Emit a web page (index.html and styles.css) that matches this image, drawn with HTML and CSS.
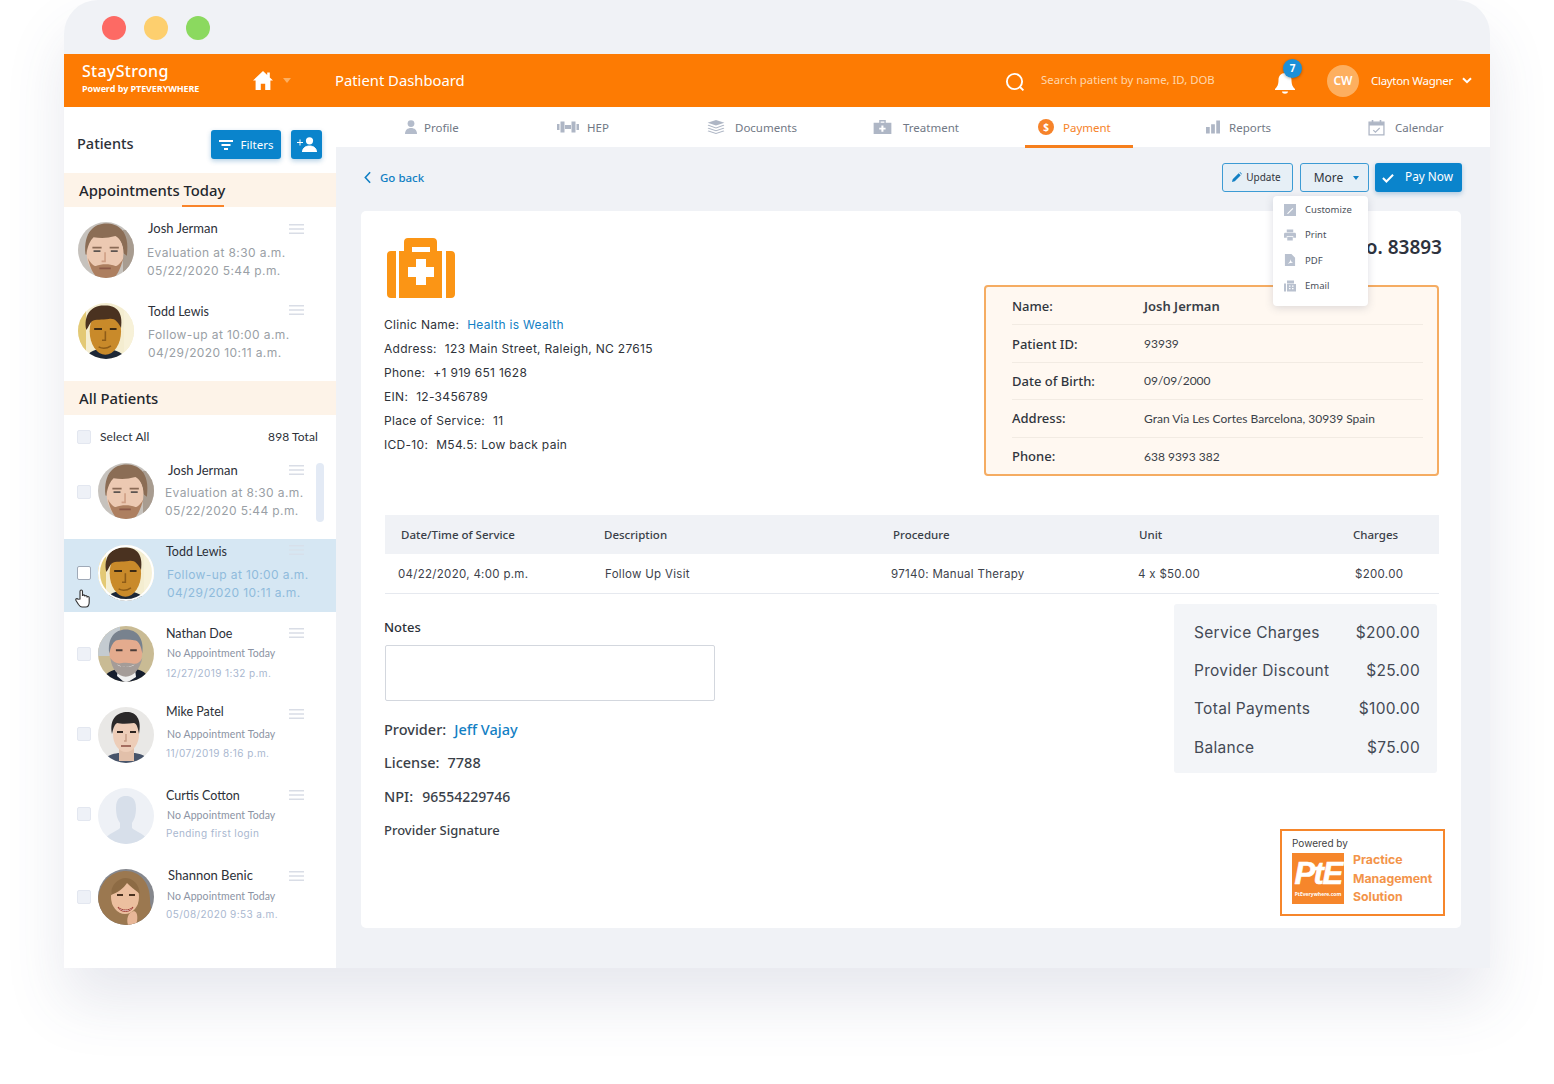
FILE: index.html
```html
<!DOCTYPE html>
<html lang="en">
<head>
	<meta charset="UTF-8">
	<title>Patient Dashboard</title>
	<link rel="stylesheet" href="styles.css">
</head>
<body>

<svg class="defs" width="0" height="0">
	<symbol id="face-josh" viewBox="0 0 56 56">
		<rect width="56" height="56" fill="#c6c2bd"/>
		<rect x="45" y="8" width="11" height="48" fill="#a89c90"/>
		<g transform="translate(-4 -2) scale(1.15)">
			<path d="M10 30C8 10 18 3 28 3s21 6 18 28l-3-2c0-8-3-14-8-15-7 2-14 1-18 1-3 3-4 9-4 15z" fill="#8b6d55"/>
			<ellipse cx="27" cy="29" rx="16" ry="21" fill="#ecc9b2"/>
			<path d="M11 28c-1-14 7-23 17-23s18 8 16 23c-2-8-4-12-8-14-7 2-13 2-19 1-3 3-5 7-6 13z" fill="#8b6d55"/>
			<path d="M12 33c2 8 4 13 8 17 5 3 11 3 15 0 4-4 6-10 8-17-2 4-5 7-7 7-5-2-12-2-17 0-2 0-5-3-7-7z" fill="#ad7f60"/>
			<path d="M16 24h8M31 24h8" stroke="#8a6a55" stroke-width="1.600"/>
			<path d="M17 27h6M32 27h6" stroke="#5c5450" stroke-width="1.600"/>
			<path d="M27 28v8h-3" stroke="#cf9f85" stroke-width="1.400" fill="none"/>
			<path d="M22 42h10" stroke="#8d5a48" stroke-width="1.600"/>
		</g>
	</symbol>
	<symbol id="face-todd" viewBox="0 0 56 56">
		<rect width="56" height="56" fill="#f4edd0"/>
		<rect x="0" width="8" height="56" fill="#e3c975"/>
		<rect x="46" width="10" height="56" fill="#f7f1d8"/>
		<path d="M8 56c2-8 10-10 18-10s18 2 22 10z" fill="#1d2736"/>
		<g transform="translate(-4 -2) scale(1.12)">
			<ellipse cx="28" cy="27" rx="14" ry="21" fill="#c98a2a"/>
			<path d="M11 26C8 12 16 3 28 4c10 0 16 6 14 20-3-6-6-9-11-8-6 1-12 0-15 2-2 2-3 5-5 8z" fill="#4a3220"/>
			<path d="M18 25h7M32 25h6" stroke="#3c2a14" stroke-width="2"/>
			<path d="M28 27v8h-3M22 41c4 2 8 1 11-1" stroke="#8e5c18" stroke-width="1.400" fill="none"/>
		</g>
	</symbol>
	<symbol id="face-nathan" viewBox="0 0 56 56">
		<rect width="56" height="56" fill="#c9bb94"/>
		<rect width="22" height="30" fill="#c4cbd0"/>
		<path d="M4 56c2-9 10-12 16-13l8 6 9-6c7 1 13 4 15 13z" fill="#161e2e"/>
		<path d="M20 43l8 6 9-6 1 8-8 5h-4l-7-6z" fill="#f0f0f0"/>
		<g transform="translate(-3 -1) scale(1.1)">
			<ellipse cx="28" cy="24" rx="15" ry="20" fill="#e4ab8e"/>
			<path d="M13 26c-2-14 5-22 15-22s17 8 15 22c-1-7-3-11-6-12-6-1-13-1-18 0-3 2-5 6-6 12z" fill="#78828e"/>
			<path d="M14 30c1 10 7 17 14 17s13-7 15-17c-2 4-5 6-9 5-4-1-9-1-12 0-3 0-6-2-8-5z" fill="#a49c98"/>
			<path d="M20 36c5 3 11 3 16 0-2 3-14 3-16 0z" fill="#fff"/>
			<path d="M19 23h6M32 23h6" stroke="#4b3c38" stroke-width="1.800"/>
		</g>
	</symbol>
	<symbol id="face-mike" viewBox="0 0 56 56">
		<rect width="56" height="56" fill="#e9e8e6"/>
		<path d="M5 56c2-8 10-9 15-10h17c6 1 13 3 15 10z" fill="#47546a"/>
		<rect x="21" y="38" width="15" height="16" fill="#e2c0aa"/>
		<ellipse cx="28" cy="27" rx="13" ry="18" fill="#edcdb8"/>
		<path d="M14 27c-3-16 6-22 15-22s15 7 12 22c-1-6-2-10-5-11-7 1-13 1-17 0-3 2-4 6-5 11z" fill="#2a2829"/>
		<path d="M19 25h6M32 25h6" stroke="#2d2420" stroke-width="2"/>
		<path d="M28 27v7h-2" stroke="#c69c85" stroke-width="1.400" fill="none"/>
		<path d="M23 39h10" stroke="#a56e60" stroke-width="1.800"/>
	</symbol>
	<symbol id="face-curtis" viewBox="0 0 56 56">
		<rect width="56" height="56" fill="#eef1f6"/>
		<path d="M18 20c0-10 5-12 10-12s10 2 10 12c0 8-2 12-4 15v5c3 3 12 6 15 11v5H7v-5c3-5 12-8 15-11v-5c-2-3-4-7-4-15z" fill="#d7dfea"/>
	</symbol>
	<symbol id="face-shannon" viewBox="0 0 56 56">
		<rect width="56" height="56" fill="#85878d"/>
		<path d="M0 56V30C2 10 16 2 28 2c14 0 24 12 24 28 0 10 4 18 4 26z" fill="#9b7850"/>
		<ellipse cx="27" cy="28" rx="14" ry="17" fill="#ecbf9f"/>
		<path d="M13 26c0-10 6-16 14-17 8 0 14 6 15 16-5-4-10-8-13-11-3 5-10 10-16 12z" fill="#8d6b44"/>
		<path d="M20 38c4 4 11 4 15 0-2 6-13 6-15 0z" fill="#fff" stroke="#a3433a"/>
		<path d="M19 26h6M31 26h6" stroke="#4a3220" stroke-width="1.800"/>
		<path d="M30 56c-2-6 0-13 6-14 4 1 4 8 2 14z" fill="#e8b798"/>
	</symbol>
	<symbol id="menu-lines" viewBox="0 0 15 10">
		<path d="M0 .7h15M0 5h15M0 9.300h15" stroke="#d9dde6" stroke-width="1.400"/>
	</symbol>
</svg>

<div class="window">
	<div class="titlebar">
		<span class="dot dot-red"></span>
		<span class="dot dot-yellow"></span>
		<span class="dot dot-green"></span>
	</div>

	<header class="topbar">
		<div class="brand">
			<div class="brand-name">StayStrong</div>
			<div class="brand-sub">Powerd by PTEVERYWHERE</div>
		</div>
		<svg class="home-icon" viewBox="0 0 20 19"><path d="M10 0L0 9.500h2.600V19h5.200v-6.200h4.400V19h5.200V9.500H20l-3.200-3V1.400h-2.600v2.700z" fill="#fff"/></svg>
		<span class="home-caret"></span>
		<div class="page-title">Patient Dashboard</div>
		<svg class="search-icon" viewBox="0 0 20 20"><circle cx="9.500" cy="9.500" r="7.600" fill="none" stroke="#fff" stroke-width="1.900"/><path d="M15 15l3.400 3.400" stroke="#fff" stroke-width="1.900"/></svg>
		<div class="search-text">Search patient by name, ID, DOB</div>
		<div class="bell">
			<svg viewBox="0 0 20 22"><path d="M10 1c-4 0-6.500 3-6.500 7 0 5-1.500 7-3.500 9v1h20v-1c-2-2-3.500-4-3.500-9 0-4-2.500-7-6.500-7zM7 19.500h6c0 3-6 3-6 0z" fill="#fff"/></svg>
			<span class="badge">7</span>
		</div>
		<div class="user-avatar">CW</div>
		<div class="user-name">Clayton Wagner</div>
		<svg class="user-chevron" viewBox="0 0 10 7"><path d="M1 1.200l4 4 4-4" fill="none" stroke="#fff" stroke-width="2"/></svg>
	</header>

	<div class="body">
		<aside class="sidebar">
			<div class="side-head">
				<h2>Patients</h2>
				<button class="btn-filter" type="button">
					<svg viewBox="0 0 14 10"><path d="M0 1h14M2.500 5h9M5 9h4" stroke="#fff" stroke-width="1.800"/></svg>
					Filters
				</button>
				<button class="btn-add" type="button">
					<svg viewBox="0 0 20 15"><circle cx="12.500" cy="3.800" r="3.600" fill="#fff"/><path d="M5.500 15c0-4 3-6 7-6s7 2 7 6zM0 5.500h6M3 2.500v6" fill="#fff" stroke="#fff" stroke-width="1"/></svg>
				</button>
			</div>

			<div class="section-bar section-today">Appointments Today</div>

			<div class="patient appt appt-first">
				<svg class="avatar"><use href="#face-josh"/></svg>
				<div class="info">
					<div class="name">Josh Jerman</div>
					<div class="appt-line">Evaluation at 8:30 a.m.</div>
					<div class="appt-line">05/22/2020 5:44 p.m.</div>
				</div>
				<svg class="menu"><use href="#menu-lines"/></svg>
			</div>
			<div class="patient appt appt-second">
				<svg class="avatar"><use href="#face-todd"/></svg>
				<div class="info">
					<div class="name">Todd Lewis</div>
					<div class="appt-line">Follow-up at 10:00 a.m.</div>
					<div class="appt-line">04/29/2020 10:11 a.m.</div>
				</div>
				<svg class="menu"><use href="#menu-lines"/></svg>
			</div>

			<div class="section-bar section-all">All Patients</div>

			<div class="select-row">
				<span class="check"></span>
				<span class="select-label">Select All</span>
				<span class="select-total">898 Total</span>
			</div>

			<div class="patient row-josh">
				<span class="check"></span>
				<svg class="avatar"><use href="#face-josh"/></svg>
				<div class="info">
					<div class="name">Josh Jerman</div>
					<div class="appt-line">Evaluation at 8:30 a.m.</div>
					<div class="appt-line">05/22/2020 5:44 p.m.</div>
				</div>
				<svg class="menu"><use href="#menu-lines"/></svg>
				<span class="scrollbar"></span>
			</div>
			<div class="patient row-todd selected">
				<span class="check"></span>
				<svg class="avatar"><use href="#face-todd"/></svg>
				<div class="info">
					<div class="name">Todd Lewis</div>
					<div class="appt-line">Follow-up at 10:00 a.m.</div>
					<div class="appt-line">04/29/2020 10:11 a.m.</div>
				</div>
				<svg class="menu"><use href="#menu-lines"/></svg>
				<svg class="hand" viewBox="0 0 16 19"><path d="M5 10V2.500c0-2 2.500-2 2.500 0V7c0-1.500 2.300-1.500 2.300 0v.6c0-1.400 2.200-1.400 2.200 0v.8c0-1.300 2.200-1.300 2.200 0V13c0 3-1.500 5-3.500 5H7c-1.500 0-2.500-1-3.500-2.500L1 11.500c-.8-1.500 1-2.500 2-1.300z" fill="#fff" stroke="#333" stroke-width="1.100"/></svg>
			</div>
			<div class="patient row-plain row-nathan">
				<span class="check"></span>
				<svg class="avatar"><use href="#face-nathan"/></svg>
				<div class="info">
					<div class="name">Nathan Doe</div>
					<div class="none-line">No Appointment Today</div>
					<div class="date-line">12/27/2019 1:32 p.m.</div>
				</div>
				<svg class="menu"><use href="#menu-lines"/></svg>
			</div>
			<div class="patient row-plain row-mike">
				<span class="check"></span>
				<svg class="avatar"><use href="#face-mike"/></svg>
				<div class="info">
					<div class="name">Mike Patel</div>
					<div class="none-line">No Appointment Today</div>
					<div class="date-line">11/07/2019 8:16 p.m.</div>
				</div>
				<svg class="menu"><use href="#menu-lines"/></svg>
			</div>
			<div class="patient row-plain row-curtis">
				<span class="check"></span>
				<svg class="avatar"><use href="#face-curtis"/></svg>
				<div class="info">
					<div class="name">Curtis Cotton</div>
					<div class="none-line">No Appointment Today</div>
					<div class="date-line">Pending first login</div>
				</div>
				<svg class="menu"><use href="#menu-lines"/></svg>
			</div>
			<div class="patient row-plain row-shannon">
				<span class="check"></span>
				<svg class="avatar"><use href="#face-shannon"/></svg>
				<div class="info">
					<div class="name">Shannon Benic</div>
					<div class="none-line">No Appointment Today</div>
					<div class="date-line">05/08/2020 9:53 a.m.</div>
				</div>
				<svg class="menu"><use href="#menu-lines"/></svg>
			</div>
		</aside>

		<main class="main">
			<nav class="tabs">
				<div class="tab tab-profile">
					<svg viewBox="0 0 14 14"><circle cx="7" cy="3.600" r="3.400" fill="#b4bccb"/><path d="M1 14c0-4 2.500-6 6-6s6 2 6 6z" fill="#b4bccb"/></svg>
					Profile
				</div>
				<div class="tab">
					<svg class="tab-hep" viewBox="0 0 22 12"><path d="M0 3h2.500v6H0zM3.500 .5h4v11h-4zM14.500 .5h4v11h-4zM19.500 3H22v6h-2.500zM8 4h6v4H8z" fill="#aeb6c5"/></svg>
					HEP
				</div>
				<div class="tab">
					<svg class="tab-doc" viewBox="0 0 18 15"><path d="M9 0l9 3-9 3-9-3zM1 5.200l8 2.800 8-2.800 1 .8-9 3-9-3zM1 8.200L9 11l8-2.800 1 .8-9 3-9-3zM1 11.200L9 14l8-2.800 1 .8-9 3-9-3z" fill="#aeb6c5"/></svg>
					Documents
				</div>
				<div class="tab">
					<svg class="tab-wide" viewBox="0 0 19 15"><path d="M6 3V0h7v3h6v12H0V3zm1.500 0h4V1.500h-4zM8.300 6v2.300H6v2h2.300v2.300h2.200v-2.300h2.300v-2h-2.300V6z" fill="#aeb6c5" fill-rule="evenodd"/></svg>
					Treatment
				</div>
				<div class="tab tab-active">
					<span class="dollar">$</span>
					Payment
				</div>
				<div class="tab tab-reports">
					<svg viewBox="0 0 15 14"><path d="M0 7h4v7H0zM5.500 4h4v10h-4zM11 0h4v14h-4z" fill="#aeb6c5"/></svg>
					Reports
				</div>
				<div class="tab">
					<svg class="tab-cal" viewBox="0 0 16 16"><path d="M1 3h14v12H1z" fill="none" stroke="#aeb6c5" stroke-width="1.200"/><path d="M1 3h14v3H1zM3.500 1h1.500v3H3.500zM11 1h1.500v3H11z" fill="#aeb6c5"/><path d="M5 10.500l2 2 4-4" fill="none" stroke="#aeb6c5" stroke-width="1.100"/></svg>
					Calendar
				</div>
			</nav>

			<div class="content">
				<div class="actions">
					<a class="go-back">
						<svg viewBox="0 0 8 14"><path d="M7 1L1.500 7 7 13" fill="none" stroke="#1280c4" stroke-width="1.800"/></svg>
						Go back
					</a>
					<button class="btn-outline btn-update" type="button">
						<svg viewBox="0 0 12 12"><path d="M0 12l.8-3.400L8 1.500 10.500 4l-7.200 7.200zM9 .5l.7-.5 2.300 2.300-.6.700z" fill="#1280c4"/></svg>
						Update
					</button>
					<div class="more-wrap">
						<button class="btn-outline btn-more" type="button">More <span class="more-caret"></span></button>
						<div class="dropdown">
							<div class="drop-item">
								<svg viewBox="0 0 12 12"><path d="M0 0h12v12H0zM3 9.500l5.500-5.500 .8.800L4 10z" fill="#b9c1cf" fill-rule="evenodd"/></svg>
								Customize
							</div>
							<div class="drop-item">
								<svg viewBox="0 0 13 12"><path d="M3 0h7v3H3zM1.500 3.500h10c1 0 1.500.7 1.500 1.500v4h-3V7H3v2H0V5c0-.8.500-1.500 1.500-1.500zM3.500 8h6v4h-6z" fill="#b9c1cf"/></svg>
								Print
							</div>
							<div class="drop-item">
								<svg viewBox="0 0 11 13"><path d="M0 0h7l4 4v9H0zM3 10.500c2-1 3-3 3-5 0 2 1 3.500 3 4-2 0-4 .3-6 1z" fill="#b9c1cf" fill-rule="evenodd"/></svg>
								PDF
							</div>
							<div class="drop-item">
								<svg viewBox="0 0 12 11"><path d="M0 3h2v8H0zM3 0h7v3H3zM3 3.500h9V11H3zM5 5v1.200h1.500V5zM8 5v1.200h1.500V5zM5 7.500v1.200h1.500V7.500zM8 7.500v1.200h1.500V7.500z" fill="#b9c1cf" fill-rule="evenodd"/></svg>
								Email
							</div>
						</div>
					</div>
					<button class="btn-pay" type="button">
						<svg viewBox="0 0 13 10"><path d="M1 5l3.800 3.800L12 1.500" fill="none" stroke="#fff" stroke-width="2.200"/></svg>
						Pay Now
					</button>
				</div>

				<div class="card">
					<div class="card-top">
						<div class="clinic">
							<svg class="clinic-icon" viewBox="0 0 69 60"><path d="M1 17c0-2.500 1.500-4 4-4h5v47H5c-2.500 0-4-1.500-4-4zM69 17c0-2.500-1.500-4-4-4h-5v47h5c2.500 0 4-1.500 4-4zM13 13h5V4c0-2.500 1.500-4 4-4h25c2.500 0 4 1.500 4 4v9h5v47H13zm13-4v5h18V9zM30 21v8h-8v10h8v8h10v-8h8V29h-8v-8z" fill="#fb9515" fill-rule="evenodd"/></svg>
							<div class="clinic-line">Clinic Name:<a class="val">Health is Wealth</a></div>
							<div class="clinic-line">Address:<span class="val">123 Main Street, Raleigh, NC 27615</span></div>
							<div class="clinic-line">Phone:<span class="val">+1 919 651 1628</span></div>
							<div class="clinic-line">EIN:<span class="val">12-3456789</span></div>
							<div class="clinic-line">Place of Service:<span class="val">11</span></div>
							<div class="clinic-line">ICD-10:<span class="val">M54.5: Low back pain</span></div>
						</div>
						<div class="invoice">
							<div class="invoice-no">Invoice No. 83893</div>
							<dl class="patient-box">
								<div class="box-row"><dt>Name:</dt><dd class="box-name">Josh Jerman</dd></div>
								<div class="box-row"><dt>Patient ID:</dt><dd>93939</dd></div>
								<div class="box-row"><dt>Date of Birth:</dt><dd>09/09/2000</dd></div>
								<div class="box-row"><dt>Address:</dt><dd>Gran Via Les Cortes Barcelona, 30939 Spain</dd></div>
								<div class="box-row"><dt>Phone:</dt><dd>638 9393 382</dd></div>
							</dl>
						</div>
					</div>

					<div class="service-table">
						<div class="service-head">
							<span>Date/Time of Service</span>
							<span>Description</span>
							<span>Procedure</span>
							<span>Unit</span>
							<span>Charges</span>
						</div>
						<div class="service-row">
							<span>04/22/2020, 4:00 p.m.</span>
							<span>Follow Up Visit</span>
							<span>97140: Manual Therapy</span>
							<span>4 x $50.00</span>
							<span>$200.00</span>
						</div>
					</div>

					<div class="card-bottom">
						<div class="provider">
							<div class="notes-label">Notes</div>
							<div class="notes-box"></div>
							<div class="provider-line">Provider:<a class="val">Jeff Vajay</a></div>
							<div class="provider-line">License:<span class="val">7788</span></div>
							<div class="provider-line">NPI:<span class="val val-npi">96554229746</span></div>
							<div class="provider-line provider-sign">Provider Signature</div>
						</div>
						<div class="totals">
							<div class="summary">
								<div class="sum-row"><span>Service Charges</span><span>$200.00</span></div>
								<div class="sum-row"><span>Provider Discount</span><span>$25.00</span></div>
								<div class="sum-row"><span>Total Payments</span><span>$100.00</span></div>
								<div class="sum-row"><span>Balance</span><span>$75.00</span></div>
							</div>
							<div class="powered">
								<div class="powered-by">Powered by</div>
								<div class="powered-main">
									<div class="pte-box">
										<span class="pte-mark">PtE</span>
										<span class="pte-site">PtEverywhere.com</span>
									</div>
									<div class="powered-text">Practice<br>Management<br>Solution</div>
								</div>
							</div>
						</div>
					</div>
				</div>
			</div>
		</main>
	</div>
</div>

</body>
</html>
```

FILE: styles.css
```css
* {
	box-sizing: border-box;
}
html, body {
	height: 100%;
	overflow: hidden;
}
body {
	margin: 0;
	padding: 0 64px;
	background: #fff;
	font-family: "Noto Sans", sans-serif;
	color: #2c3038;
}
a {
	color: #1280c4;
}
button {
	font-family: inherit;
	cursor: pointer;
}
.defs {
	position: absolute;
}

.window {
	height: 968px;
	border-radius: 34px 34px 0 0;
	background: #f0f2f6;
	box-shadow: 0 34px 60px rgba(70, 80, 120, 0.13);
	display: flex;
	flex-direction: column;
}
.titlebar {
	height: 54px;
	flex: none;
	display: flex;
	align-items: center;
	gap: 18px;
	padding: 2px 0 0 38px;
}
.dot {
	width: 24px;
	height: 24px;
	border-radius: 50%;
}
.dot-red { background: #fd6a64; }
.dot-yellow { background: #fdcf6e; }
.dot-green { background: #8bd95f; }

/* orange bar */
.topbar {
	height: 53px;
	flex: none;
	display: flex;
	align-items: center;
	background: #fd7b03;
	color: #fff;
	padding: 0 18px;
}
.brand {
	width: 171px;
	margin-top: -5px;
}
.brand-name {
	font-size: 16px;
	font-weight: 500;
	line-height: 20px;
	letter-spacing: .3px;
}
.brand-sub {
	font-family: "Open Sans", sans-serif;
	font-size: 9px;
	font-weight: 700;
	line-height: 14px;
	margin-top: 1px;
	letter-spacing: -.1px;
}
.home-icon {
	width: 20px;
	height: 19px;
}
.home-caret {
	width: 0;
	height: 0;
	margin: 0 44px 0 10px;
	border: 4px solid transparent;
	border-top: 5px solid #fdaf61;
	border-bottom: 0;
}
.page-title {
	font-size: 14.800px;
	flex: 1;
	margin-top: -2px;
}
.search-icon {
	width: 20px;
	height: 20px;
	margin-top: 2px;
}
.search-text {
	font-size: 11.350px;
	color: #ffd7ad;
	width: 234px;
	margin: -3px 0 0 16px;
}
.bell {
	position: relative;
	width: 20px;
	height: 22px;
	margin: 4px 32px 0 0;
}
.bell svg {
	display: block;
	width: 20px;
	height: 22px;
}
.badge {
	position: absolute;
	top: -13px;
	left: 8px;
	width: 19px;
	height: 19px;
	border-radius: 50%;
	background: #1c90d8;
	box-shadow: 0 1px 3px rgba(0, 0, 0, .3);
	font-size: 10px;
	font-weight: 700;
	line-height: 19px;
	text-align: center;
}
.user-avatar {
	width: 32px;
	height: 32px;
	border-radius: 50%;
	background: #fdaf5f;
	font-size: 12px;
	font-weight: 600;
	line-height: 32px;
	text-align: center;
}
.user-name {
	font-size: 11.500px;
	letter-spacing: -.3px;
	margin: -1px 0 0 12px;
	width: 91px;
}
.user-chevron {
	width: 10px;
	height: 7px;
}

.body {
	flex: 1;
	display: flex;
	min-height: 0;
}

/* patient list */
.sidebar {
	width: 272px;
	flex: none;
	background: #fff;
}
.side-head {
	height: 66px;
	display: flex;
	align-items: flex-start;
	padding: 23px 14px 0 13px;
}
.side-head h2 {
	margin: 3px 0 0;
	flex: 1;
	font-size: 14.500px;
	font-weight: 500;
	line-height: 20px;
}
.btn-filter, .btn-add {
	height: 29px;
	padding: 0;
	border: 0;
	border-radius: 3px;
	background: #0a84cc;
	color: #fff;
	box-shadow: 0 2px 5px rgba(10, 100, 170, .3);
	display: flex;
	align-items: center;
	justify-content: center;
}
.btn-filter {
	width: 70px;
	gap: 8px;
	font-size: 11.500px;
}
.btn-filter svg {
	width: 14px;
	height: 10px;
}
.btn-add {
	width: 31px;
	margin-left: 10px;
}
.btn-add svg {
	width: 20px;
	height: 15px;
}
.section-bar {
	height: 34px;
	padding-left: 15px;
	background: #fdf3e8;
	font-size: 14.800px;
	font-weight: 500;
	line-height: 34px;
	color: #23262c;
}
.section-today {
	position: relative;
}
.section-today::after {
	content: "";
	position: absolute;
	left: 118px;
	bottom: 0;
	width: 42px;
	height: 2px;
	background: #f9842a;
}
.patient {
	display: flex;
	align-items: flex-start;
	position: relative;
	padding-right: 32px;
}
.avatar {
	width: 56px;
	height: 56px;
	flex: none;
	border-radius: 50%;
	filter: blur(.5px);
}
.info {
	flex: 1;
	margin: -3px 0 0 14px;
	min-width: 0;
}
.name {
	font-family: "Lato", sans-serif;
	font-size: 12.500px;
	line-height: 22px;
	height: 20px;
	color: #2c3038;
}
.appt-line {
	font-family: "Inter", sans-serif;
	font-size: 12px;
	line-height: 18px;
	letter-spacing: .4px;
	white-space: nowrap;
	color: #9a9fa6;
}
.none-line {
	font-family: "Lato", sans-serif;
	font-size: 10.500px;
	line-height: 18px;
	letter-spacing: .1px;
	color: #8b93a3;
	margin-left: 1px;
}
.date-line {
	font-family: "Inter", sans-serif;
	font-size: 10px;
	line-height: 18px;
	letter-spacing: .4px;
	color: #a9b7cf;
	margin-top: 1px;
}
.menu {
	width: 15px;
	height: 10px;
	flex: none;
	margin-top: 2px;
}
.check {
	width: 14px;
	height: 14px;
	flex: none;
	border: 1px solid #e3e7f0;
	border-radius: 2px;
	background: #eef1f7;
}

.appt {
	height: 87px;
	padding: 9px 32px 0 14px;
}
.appt-first {
	padding-top: 15px;
}
.appt-first .info {
	margin-top: -4px;
}
.appt-first .name {
	margin-bottom: 6px;
	font-size: 13px;
	line-height: 20px;
}
.appt-first .appt-line {
	margin-left: -1px;
}
.appt-second .info {
	margin-top: -2px;
}
.appt-second .name {
	margin-bottom: 5px;
}

.select-row {
	height: 39px;
	display: flex;
	align-items: center;
	padding: 4px 18px 0 13px;
	font-family: "Lato", sans-serif;
	font-size: 12px;
	letter-spacing: .1px;
}
.select-label {
	margin-left: 9px;
	flex: 1;
}

.patient .check {
	margin: 22px 7px 0 13px;
}
.row-josh {
	height: 85px;
	padding-top: 9px;
}
.row-josh .name {
	margin-left: 3px;
	margin-bottom: 4px;
	font-size: 13px;
	line-height: 20px;
}
.row-josh .info {
	margin-left: 11px;
}
.scrollbar {
	position: absolute;
	left: 252px;
	top: 9px;
	width: 8px;
	height: 59px;
	border-radius: 4px;
	background: #e3eaf5;
}
.selected {
	height: 73px;
	padding-top: 6px;
	background: #d6e7f3;
}
.selected .check {
	margin-top: 21px;
	background: #fff;
	border-color: #9fa9b7;
}
.selected .avatar {
	outline: 2px solid #fff;
	outline-offset: -2px;
}
.selected .info {
	margin: -4px 0 0 12px;
}
.selected .name {
	margin-bottom: 5px;
}
.selected .appt-line {
	color: #8fbbdc;
	margin-left: 1px;
}
.selected .menu {
	margin-top: 0;
	opacity: .6;
}
.hand {
	position: absolute;
	left: 11px;
	top: 50px;
	width: 16px;
	height: 19px;
}
.row-plain {
	height: 81px;
	padding-top: 14px;
}
.row-plain .info {
	margin-left: 12px;
}
.row-nathan .check {
	margin-top: 21px;
}
.row-nathan .name {
	margin-bottom: 1px;
}
.row-nathan .date-line {
	margin-top: 2px;
}
.row-mike .info {
	margin-top: -6px;
}
.row-mike .name {
	margin-bottom: 4px;
}
.row-mike .check {
	margin-top: 20px;
}
.row-curtis .name {
	margin-bottom: 1px;
}
.row-curtis .check {
	margin-top: 19px;
}
.row-curtis .date-line {
	margin-top: 0;
}
.row-shannon .check {
	margin-top: 21px;
}
.row-shannon .info {
	margin-top: -4px;
}
.row-shannon .name {
	margin: 0 0 2px 2px;
	font-size: 13px;
	line-height: 20px;
}
.row-shannon .date-line {
	margin-top: 0;
}

/* main side */
.main {
	flex: 1;
	min-width: 0;
}
.tabs {
	height: 40px;
	background: #fff;
	display: grid;
	grid-template-columns: 153px 150px 166px 152px 181px 162px auto;
	padding-left: 68px;
	font-size: 11.500px;
	color: #717885;
}
.tab {
	display: flex;
	align-items: center;
	gap: 8px;
	height: 41px;
	padding-bottom: 1px;
}
.tab svg {
	width: 14px;
	height: 14px;
	flex: none;
}
.tab-profile svg {
	margin-right: -2px;
}
.tab-reports svg {
	margin-right: 1px;
}
.tab .tab-hep {
	width: 22px;
	height: 12px;
}
.tab .tab-doc {
	width: 18px;
	margin-right: 2px;
}
.tab .tab-wide {
	width: 19px;
	margin-right: 3px;
}
.tab .tab-cal {
	width: 17px;
	height: 17px;
	margin-right: 2px;
}
.tab-active {
	width: 108px;
	padding: 2px 0 0 13px;
	color: #f6832a;
	border-bottom: 3px solid #f67f1d;
}
.dollar {
	width: 16px;
	height: 16px;
	margin-right: 1px;
	border-radius: 50%;
	background: #f6832a;
	color: #fff;
	font-size: 10px;
	font-weight: 700;
	line-height: 16px;
	text-align: center;
}
.content {
	padding: 16px 29px 0 25px;
}
.actions {
	display: flex;
	align-items: stretch;
	height: 29px;
	margin-right: -1px;
}
.go-back {
	flex: 1;
	display: flex;
	align-items: center;
	gap: 9px;
	padding-left: 3px;
	font-size: 11.500px;
	font-weight: 500;
}
.go-back svg {
	width: 7px;
	height: 13px;
}
.btn-outline {
	height: 29px;
	padding: 0;
	border: 1px solid #3c9bd4;
	border-radius: 3px;
	background: #e6eff6;
	color: #30353d;
	display: flex;
	align-items: center;
	justify-content: center;
}
.btn-update {
	width: 71px;
	margin-right: 7px;
	padding: 0 2px 1px 0;
	gap: 4px;
	font-size: 10px;
}
.btn-update svg {
	width: 10px;
	height: 10px;
}
.more-wrap {
	position: relative;
	margin-right: 6px;
}
.btn-more {
	width: 69px;
	gap: 10px;
	padding-left: 4px;
	font-size: 12px;
}
.more-caret {
	width: 0;
	height: 0;
	border: 3.500px solid transparent;
	border-top: 4px solid #1280c4;
	border-bottom: 0;
}
.dropdown {
	position: absolute;
	top: 33px;
	right: 1px;
	width: 95px;
	height: 110px;
	padding-top: 1px;
	border-radius: 4px;
	background: #fff;
	box-shadow: 0 2px 8px rgba(60, 70, 100, .18);
	z-index: 2;
}
.drop-item {
	height: 25.300px;
	display: flex;
	align-items: center;
	gap: 9px;
	padding-left: 11px;
	font-size: 9.500px;
	color: #4a4f59;
}
.drop-item svg {
	width: 12px;
	height: 12px;
}
.btn-pay {
	width: 87px;
	height: 29px;
	padding: 0 2px 4px 0;
	border: 0;
	border-radius: 3px;
	background: #0a84cc;
	color: #fff;
	box-shadow: 0 2px 5px rgba(10, 100, 170, .3);
	font-size: 11.800px;
	display: flex;
	align-items: center;
	justify-content: center;
	gap: 11px;
}
.btn-pay svg {
	width: 12px;
	height: 10px;
	margin-top: 4px;
}

.card {
	height: 717px;
	margin-top: 19px;
	border-radius: 5px;
	background: #fff;
	padding: 27px 22px 0 23px;
}
.card-top {
	display: flex;
	justify-content: space-between;
	height: 277px;
}
.clinic-icon {
	display: block;
	width: 69px;
	height: 60px;
	margin: 0 0 15px 2px;
}
.clinic-line {
	font-family: "Inter", sans-serif;
	font-size: 12px;
	line-height: 24px;
	letter-spacing: .3px;
	color: #2f333a;
	white-space: nowrap;
}
.val {
	margin-left: 8px;
}
.invoice {
	width: 456px;
	display: flex;
	flex-direction: column;
	align-items: flex-end;
}
.invoice-no {
	font-size: 19px;
	font-weight: 600;
	line-height: 20px;
	color: #2d323d;
	margin: -1px -3px 19px 0;
	white-space: nowrap;
}
.patient-box {
	width: 455px;
	height: 191px;
	margin: 9px 0 0;
	padding: 1px 14px 0 26px;
	border: 2px solid #f5ac62;
	border-radius: 4px;
	background: #fff8f1;
}
.box-row {
	height: 37.400px;
	display: flex;
	align-items: center;
	border-bottom: 1px solid #f2ebe3;
}
.box-row:last-child {
	border-bottom: 0;
}
.box-row dt {
	width: 132px;
	font-size: 13px;
	font-weight: 500;
	color: #30353d;
}
.box-row dd {
	margin: 0;
	font-family: "Lato", sans-serif;
	font-size: 12px;
	color: #3a3f48;
}
.box-row .box-name {
	font-family: "Noto Sans", sans-serif;
	font-size: 13px;
	font-weight: 600;
}

.service-table {
	margin-left: 1px;
}
.service-head, .service-row {
	display: grid;
	align-items: center;
}
.service-head {
	height: 39px;
	grid-template-columns: 203px 289px 246px 214px auto;
	background: #f0f2f6;
	font-size: 11.500px;
	font-weight: 500;
	padding-left: 16px;
	color: #3a3f48;
}
.service-row {
	height: 40px;
	grid-template-columns: 207px 286px 247px 217px auto;
	border-bottom: 1px solid #e6e9ef;
	font-family: "Inter", sans-serif;
	font-size: 11.500px;
	letter-spacing: .3px;
	color: #3d424b;
	padding-left: 13px;
}

.card-bottom {
	display: flex;
	justify-content: space-between;
	margin-top: 10px;
}
.notes-label {
	font-size: 13px;
	font-weight: 500;
	line-height: 20px;
	margin-top: 13px;
}
.notes-box {
	width: 330px;
	height: 56px;
	margin: 8px 0 18px 1px;
	border: 1px solid #d3d7de;
	border-radius: 2px;
}
.provider-line {
	font-size: 14.500px;
	font-weight: 500;
	line-height: 20px;
	margin-bottom: 13.400px;
	color: #3a3f48;
}
.val-npi {
	margin-left: 9px;
	font-size: 14px;
}
.provider-sign {
	font-size: 13px;
}
.totals {
	display: flex;
	flex-direction: column;
	align-items: flex-end;
	padding-right: 2px;
}
.summary {
	width: 263px;
	height: 169px;
	padding: 9px 17px 0 20px;
	border-radius: 3px;
	background: #f3f5f8;
	font-family: "Inter", sans-serif;
	font-size: 15.500px;
	color: #444a55;
}
.sum-row {
	height: 38.400px;
	display: flex;
	align-items: center;
	justify-content: space-between;
	letter-spacing: .3px;
}
.powered {
	width: 165px;
	height: 87px;
	margin: 56px -8px 0 0;
	padding: 6px 0 0 10px;
	border: 2px solid #f6862b;
}
.powered-by {
	font-family: "Inter", sans-serif;
	font-size: 10px;
	line-height: 12px;
	color: #444;
}
.powered-main {
	display: flex;
	align-items: center;
	gap: 9px;
	margin-top: 2px;
}
.pte-box {
	width: 52px;
	height: 51px;
	padding-top: 4px;
	background: #f6862b;
	color: #fff;
	display: flex;
	flex-direction: column;
	align-items: center;
}
.pte-mark {
	font-family: "Liberation Sans", sans-serif;
	font-size: 31px;
	font-style: italic;
	font-weight: 700;
	line-height: 33px;
	letter-spacing: -1.500px;
	-webkit-text-stroke: .6px #fff;
}
.pte-site {
	font-size: 5px;
	font-weight: 700;
	line-height: 8px;
	white-space: nowrap;
}
.powered-text {
	font-family: "Inter", sans-serif;
	font-size: 12.300px;
	font-weight: 700;
	line-height: 18.500px;
	color: #f3944a;
}
```
